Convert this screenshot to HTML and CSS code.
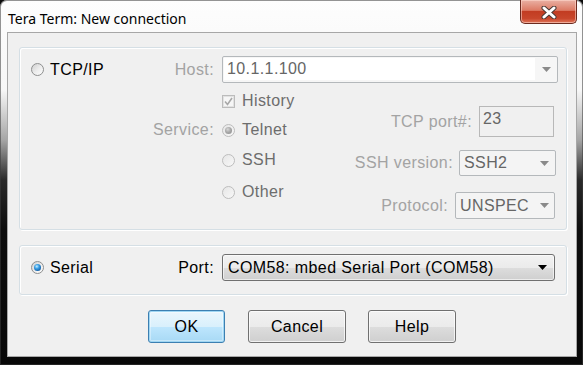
FILE: index.html
```html
<!DOCTYPE html>
<html lang="en">
<head>
  <meta charset="UTF-8">
  <title>Tera Term: New connection</title>
  <link rel="stylesheet" href="styles.css">
</head>
<body>
  <div class="window">
    <!-- Title bar -->
    <div class="titlebar">
      <span class="title">Tera Term: New connection</span>
      <div class="close">
        <svg width="16" height="13" viewBox="0 0 16 13">
          <path d="M3 2 L13 11 M13 2 L3 11" stroke="#4a3a36" stroke-width="5" stroke-linecap="round"/>
          <path d="M3 2 L13 11 M13 2 L3 11" stroke="#fff" stroke-width="3" stroke-linecap="round"/>
        </svg>
      </div>
    </div>

    <div class="client">
      <!-- TCP/IP group -->
      <div class="group group-tcp">
        <div class="row host-row">
          <div class="lead">
            <label class="opt opt-main"><span class="radio"></span>TCP/IP</label>
            <span class="lbl">Host:</span>
          </div>
          <div class="combo combo-host">
            <span class="edit">10.1.1.100</span>
            <span class="arrow"><svg width="9" height="5" viewBox="0 0 9 5"><polygon points="0,0 9,0 4.5,5" fill="#8a8a8a"/></svg></span>
          </div>
        </div>

        <div class="row lower">
          <div class="lead lead-service">
            <span class="lbl">Service:</span>
          </div>
          <div class="body">
            <div class="opts">
              <label class="opt opt-history">
                <span class="check"><svg width="9" height="9" viewBox="0 0 9 9"><polyline points="1,4.5 3.5,7.5 8,1" fill="none" stroke="#a8a8a8" stroke-width="1.6"/></svg></span>History
              </label>
              <label class="opt opt-telnet"><span class="radio radio-dis radio-on"></span>Telnet</label>
              <label class="opt opt-ssh"><span class="radio radio-dis"></span>SSH</label>
              <label class="opt opt-other"><span class="radio radio-dis"></span>Other</label>
            </div>
            <div class="params">
              <div class="param param-port">
                <span class="lbl">TCP port#:</span>
                <span class="field">23</span>
              </div>
              <div class="param param-sshver">
                <span class="lbl">SSH version:</span>
                <div class="combo combo-list combo-ssh">
                  <span class="value">SSH2</span>
                  <span class="arrow"><svg width="9" height="5" viewBox="0 0 9 5"><polygon points="0,0 9,0 4.5,5" fill="#8a8a8a"/></svg></span>
                </div>
              </div>
              <div class="param param-proto">
                <span class="lbl">Protocol:</span>
                <div class="combo combo-list combo-proto">
                  <span class="value">UNSPEC</span>
                  <span class="arrow"><svg width="9" height="5" viewBox="0 0 9 5"><polygon points="0,0 9,0 4.5,5" fill="#8a8a8a"/></svg></span>
                </div>
              </div>
            </div>
          </div>
        </div>
      </div>

      <!-- Serial group -->
      <div class="group group-serial">
        <div class="row">
          <div class="lead">
            <label class="opt opt-main"><span class="radio radio-on radio-blue"></span>Serial</label>
            <span class="lbl lbl-on">Port:</span>
          </div>
          <div class="combo combo-port">
            <span class="value">COM58: mbed Serial Port (COM58)</span>
            <span class="arrow"><svg width="9" height="5" viewBox="0 0 9 5"><polygon points="0,0 9,0 4.5,5" fill="#000"/></svg></span>
          </div>
        </div>
      </div>

      <!-- Buttons -->
      <div class="buttons">
        <button class="btn btn-default btn-ok">OK</button>
        <button class="btn btn-cancel">Cancel</button>
        <button class="btn btn-help">Help</button>
      </div>
    </div>
  </div>
</body>
</html>
```

FILE: styles.css
```css
body {
  margin: 0;
  background: #0b0b0b;
  font-family: "Liberation Sans", Arial, sans-serif;
  font-size: 16px;
  letter-spacing: 0.4px;
}

.window {
  width: 583px;
  height: 365px;
  overflow: hidden;
  border-radius: 7px 7px 0 0;
  background: linear-gradient(to bottom, #fdfdfd 0, #f7f7f7 90px, #a5a5a5 140px, #2a2a2a 180px, #0d0d0d 230px, #080808 100%);
  box-shadow: inset 0 0 0 1px rgba(60, 60, 60, 0.55);
}

/* title bar */
.titlebar {
  display: flex;
  height: 32px;
}

.title {
  padding: 9px 0 0 8px;
  font-family: "Noto Sans", sans-serif;
  font-size: 14px;
  line-height: 19px;
  letter-spacing: 0;
  color: #000;
}

.close {
  margin-left: auto;
  margin-right: 6px;
  width: 57px;
  height: 24px;
  box-sizing: border-box;
  border: 1px solid #6b2a1f;
  border-top: none;
  border-radius: 0 0 5px 5px;
  background: linear-gradient(to bottom, #eab1a4 0, #dc7a64 45%, #c23c22 50%, #c8462b 80%, #e0755a 100%);
  box-shadow: inset 0 0 0 1px rgba(255, 220, 210, 0.55);
  display: flex;
  align-items: center;
  justify-content: center;
}

.close svg {
  margin-top: 1px;
}

/* client area */
.client {
  margin: 0 6px 0 7px;
  height: 325px;
  box-sizing: border-box;
  border: 1px solid #a7a7a7;
  background: #f0f0f0;
}

.group {
  margin: 14px 9px 0 11px;
  box-sizing: border-box;
  border: 1px solid #d5dfe5;
  border-radius: 3px;
  box-shadow: inset 1px 1px 0 #fff, 1px 1px 0 #fff;
  padding-right: 10px;
}

.group-tcp {
  height: 183px;
}

.group-serial {
  margin-top: 15px;
  height: 50px;
  padding-top: 8px;
}

.row {
  display: grid;
  grid-template-columns: 194px 1fr;
  column-gap: 8px;
}

.host-row {
  padding-top: 8px;
}

.lead {
  display: flex;
  align-items: center;
  justify-content: space-between;
}

.lead-service {
  align-items: flex-start;
  justify-content: flex-end;
  padding-top: 35px;
}

.lead-service .lbl {
  line-height: 24px;
}

.lbl {
  color: #a3a3a3;
  white-space: nowrap;
}

.lbl-on {
  color: #000;
}

.opt {
  display: flex;
  align-items: center;
  height: 24px;
  color: #6d6d6d;
  white-space: nowrap;
}

.opt-main {
  padding-left: 11px;
  color: #000;
}

.opt-main .radio {
  margin-right: 6px;
}

/* radio buttons */
.radio {
  position: relative;
  width: 13px;
  height: 13px;
  margin-right: 7px;
  box-sizing: border-box;
  border-radius: 50%;
  border: 1px solid #8e8f8f;
  background: linear-gradient(135deg, #cfcfcf 0, #eeeeee 55%, #fdfdfd 100%);
  flex: none;
}

.radio-dis {
  border-color: #bdbdbd;
  background: linear-gradient(135deg, #e6e6e6, #f8f8f8);
}

.radio-on::after {
  content: "";
  position: absolute;
  left: 2px;
  top: 2px;
  width: 7px;
  height: 7px;
  border-radius: 50%;
  background: radial-gradient(circle at 40% 35%, #d8d8d8 0, #a9a9a9 45%, #8a8a8a 100%);
}

.radio-blue::after {
  background: radial-gradient(circle at 40% 35%, #c9f0ff 0, #3aa0e6 35%, #125ea6 75%, #0b3e70 100%);
}

/* checkbox */
.check {
  width: 13px;
  height: 13px;
  margin-right: 7px;
  box-sizing: border-box;
  border: 1px solid #bcbcbc;
  background: #f6f6f6;
  box-shadow: inset 0 0 0 1px #e2e2e2;
  display: flex;
  align-items: center;
  justify-content: center;
  flex: none;
}

/* combo boxes */
.combo {
  display: flex;
  align-items: center;
  box-sizing: border-box;
  white-space: nowrap;
}

.combo .arrow {
  margin-left: auto;
  width: 22px;
  display: flex;
  justify-content: center;
}

.combo-host {
  height: 27px;
  border: 1px solid #b4b8bb;
  border-radius: 2px;
  background: #f6f6f6;
}

.combo-host .edit {
  align-self: stretch;
  width: 308px;
  margin: 1px 0 2px 1px;
  padding-left: 3px;
  background: #fff;
  color: #666;
  display: flex;
  align-items: center;
}

.combo-list {
  height: 26px;
  border: 1px solid #b4b8bb;
  border-radius: 2px;
  background: #f4f4f4;
  padding-left: 4px;
  color: #666;
}

.combo-ssh {
  width: 97px;
}

.combo-proto {
  width: 100px;
  height: 27px;
  margin-right: 1px;
}

.combo-proto .arrow {
  width: 20px;
}

.combo-port {
  height: 27px;
  width: 333px;
  border: 1px solid #707070;
  border-radius: 3px;
  padding-left: 5px;
  color: #000;
  background: linear-gradient(to bottom, #f2f2f2 0, #ebebeb 50%, #dddddd 51%, #cfcfcf 100%);
  box-shadow: inset 0 0 0 1px rgba(255, 255, 255, 0.6);
}

.combo-port .arrow {
  width: 24px;
}

/* lower part of the tcp group */
.body {
  display: flex;
}

.opts {
  display: flex;
  flex-direction: column;
}

.opt-history {
  margin-top: 6px;
}

.opt-telnet {
  margin-top: 5px;
}

.opt-ssh {
  margin-top: 6px;
}

.opt-other {
  margin-top: 8px;
}

.params {
  margin-left: auto;
  display: flex;
  flex-direction: column;
  align-items: flex-end;
}

.param {
  display: flex;
  align-items: center;
  gap: 7px;
}

.param-port {
  margin-top: 23px;
}

.param-sshver {
  margin-top: 13px;
  gap: 6px;
}

.param-proto {
  margin-top: 16px;
}

.field {
  width: 75px;
  height: 31px;
  box-sizing: border-box;
  margin-right: 2px;
  border: 1px solid #b8b8b8;
  background: #f0f0f0;
  color: #666;
  padding: 3px 0 0 3px;
}

/* buttons */
.buttons {
  display: flex;
  margin-top: 15px;
  padding-left: 140px;
}

.btn {
  height: 33px;
  box-sizing: border-box;
  border: 1px solid #707070;
  border-radius: 3px;
  background: linear-gradient(to bottom, #f2f2f2 0, #ebebeb 50%, #dddddd 51%, #cfcfcf 100%);
  box-shadow: inset 0 0 0 1px rgba(255, 255, 255, 0.7);
  font-family: "Liberation Sans", Arial, sans-serif;
  font-size: 16px;
  letter-spacing: 0.4px;
  color: #000;
  padding: 0;
}

.btn-default {
  border-color: #3c7fb1;
  background: linear-gradient(to bottom, #eaf6fd 0, #d9f0fc 50%, #bee6fd 51%, #a7d9f5 100%);
  box-shadow: inset 0 0 0 1px #9fd6f3, inset 0 0 0 2px rgba(255, 255, 255, 0.35);
}

.btn-ok {
  width: 77px;
}

.btn-cancel {
  width: 98px;
  margin-left: 23px;
}

.btn-help {
  width: 88px;
  margin-left: 22px;
}
```
